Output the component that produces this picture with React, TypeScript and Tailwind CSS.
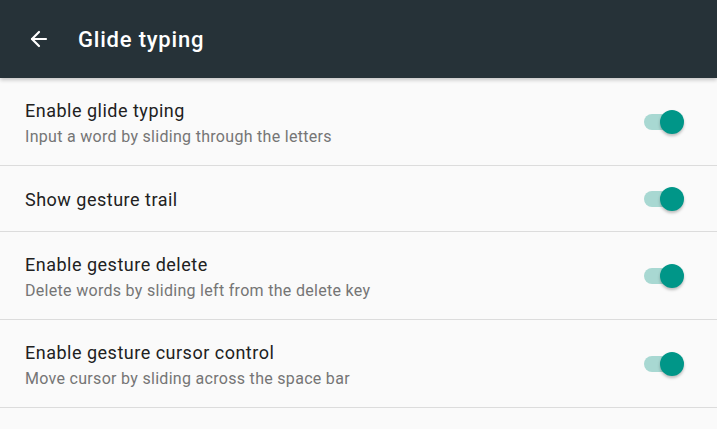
import { ArrowLeft } from "lucide-react";

type Setting = {
  title: string;
  summary?: string;
};

const settings: Setting[] = [
  { title: "Enable glide typing", summary: "Input a word by sliding through the letters" },
  { title: "Show gesture trail" },
  { title: "Enable gesture delete", summary: "Delete words by sliding left from the delete key" },
  { title: "Enable gesture cursor control", summary: "Move cursor by sliding across the space bar" },
];

function Toggle() {
  return (
    <div className="relative h-6 w-[40px] shrink-0">
      <div className="absolute left-0 top-1 h-4 w-[36px] rounded-full bg-[#a8d8d2]" />
      <div className="absolute right-0 top-0 h-6 w-6 rounded-full bg-[#009688] shadow-[0_2px_3px_rgba(0,0,0,0.25)]" />
    </div>
  );
}

function SettingRow({ title, summary }: Setting) {
  return (
    <div
      className={`flex items-center border-b border-[#dcdcdc] pl-[25px] pr-[33px] ${
        summary ? "h-[88px]" : "h-[66px]"
      }`}
    >
      <div className="flex-1 pt-[2px]">
        <p className="text-[18px] leading-6 tracking-[0.5px] text-[#212121]">{title}</p>
        {summary && (
          <p className="mt-[4px] text-[16px] leading-5 tracking-[0.3px] text-[#757575]">{summary}</p>
        )}
      </div>
      <Toggle />
    </div>
  );
}

export default function App() {
  return (
    <div className="h-[429px] w-[717px] overflow-hidden bg-[#fafafa] font-['Roboto',sans-serif]">
      <header className="relative z-10 flex h-[78px] items-center bg-[#263238] shadow-[0_2px_4px_rgba(0,0,0,0.22)]">
        <button className="ml-[27px] flex h-6 w-6 items-center justify-center text-white">
          <ArrowLeft size={24} strokeWidth={2.2} />
        </button>
        <h1 className="ml-[27px] text-[22px] font-medium tracking-[0.8px] text-white">Glide typing</h1>
      </header>
      <div>
        {settings.map((s) => (
          <SettingRow key={s.title} {...s} />
        ))}
      </div>
    </div>
  );
}
